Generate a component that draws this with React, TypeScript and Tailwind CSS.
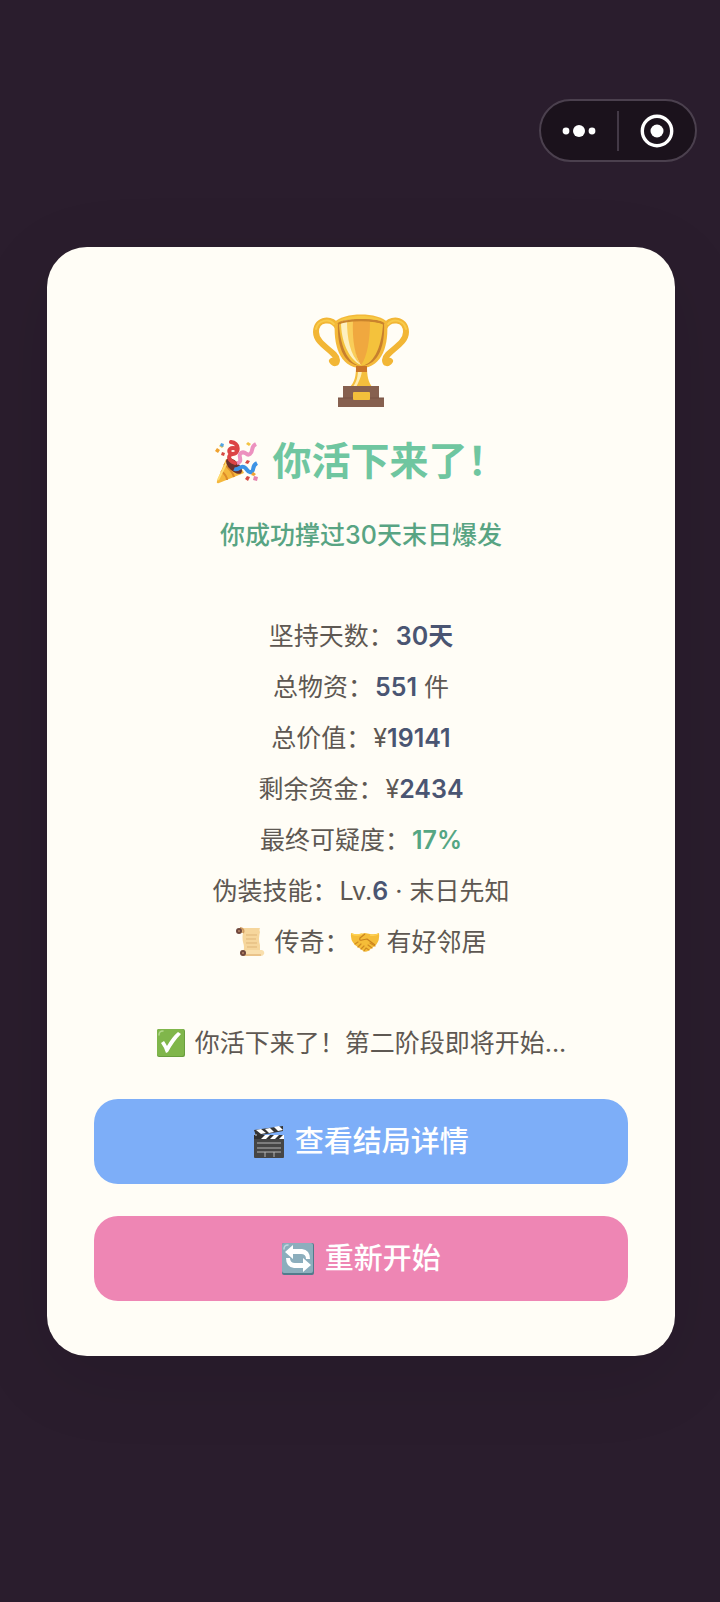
import type { ReactNode } from "react"

type IconProps = {
  className?: string
}

type Stat = {
  label: string
  content: ReactNode
}

function TrophyIcon({ className }: IconProps) {
  return (
    <svg viewBox="0 0 96 96" className={className} aria-hidden="true">
      <path d="M25 17C20 6 3 7 3 21C3 34 23 40 24 49C24 53 21 53 19 50" fill="none" stroke="#f2b635" strokeWidth="6" strokeLinecap="round" />
      <path d="M71 17C76 6 93 7 93 21C93 34 73 40 72 49C72 53 75 53 77 50" fill="none" stroke="#f2b635" strokeWidth="6" strokeLinecap="round" />
      <path d="M21 13C16 7 5 9 3 18" fill="none" stroke="#f8cb4b" strokeWidth="2" strokeLinecap="round" />
      <path d="M75 13C80 7 91 9 93 18" fill="none" stroke="#f8cb4b" strokeWidth="2" strokeLinecap="round" />
      <path d="M36 77C42 71 43 65 43 55H54C54 65 55 71 60 77Z" fill="#f4bf3d" />
      <path d="M39 77C44 71 45 65 45 58H49C49 66 45 71 43 77Z" fill="#fdeeb4" />
      <path d="M22 11C30 1 66 1 74 11C76 32 70 57 48 57C26 57 20 32 22 11Z" fill="#f4b93a" />
      <path d="M25 12C33 6 63 6 71 12C72 32 67 54 48 55C29 54 24 32 25 12Z" fill="#c77f2e" />
      <path d="M26 13C34 9 62 9 70 13C69 31 63 53 48 55C33 53 27 31 26 13Z" fill="#f4c23c" />
      <path d="M28 11C35 8 41 9 42 9C41 30 44 46 48 54C35 48 28 29 28 11Z" fill="#fdf0c0" />
      <path d="M34 10L41 9C40 30 43 46 47 53C37 44 34 27 34 10Z" fill="#f9cd59" />
      <path d="M40 9H57C57 30 54 46 48 54C42 46 39 29 40 9Z" fill="#f0a83f" />
      <path d="M24 11C32 3 64 3 72 11C62 7 34 7 24 11Z" fill="#f7c943" />
      <path d="M25 13C33 8 63 8 71 13" fill="none" stroke="#c9842d" strokeWidth="2" />
      <path d="M43 55H54V61H43Z" fill="#c97427" />
      <path d="M30 75H66V87H71V96H25V87H30Z" fill="#86604f" />
      <path d="M25 87H71" stroke="#795244" />
      <rect x="40" y="81" width="17" height="8" rx="1" fill="#f2bf3b" />
    </svg>
  )
}

function PartyIcon({ className }: IconProps) {
  return (
    <svg viewBox="0 0 44 44" className={className} aria-hidden="true">
      <path d="M11 19C17 20 27 27 29 33L4 43Q1 44 2 41Z" fill="#f5b83d" />
      <path d="M9 24C15 29 18 33 19 37M6 31C10 34 12 37 12 40" fill="none" stroke="#dd8b29" strokeWidth="2" />
      <path d="M3 40L12 22" stroke="#ffdc70" strokeWidth="2" />
      <ellipse cx="19" cy="26" rx="5" ry="10" transform="rotate(-46 19 26)" fill="#69302c" />
      <path d="M20 23C12 20 13 14 18 14C23 14 23 8 18 8C13 8 13 14 18 14C25 13 24 3 16 2" fill="none" stroke="#dc4445" strokeWidth="4" strokeLinecap="round" />
      <path d="M22 23C29 22 22 15 26 13C31 10 31 17 35 14C39 11 35 7 41 4" fill="none" stroke="#ec91bf" strokeWidth="4" />
      <path d="M19 29C24 31 25 25 29 27C33 29 32 33 36 32C40 31 36 26 42 23" fill="none" stroke="#3d93e5" strokeWidth="4" />
      <path d="M6 4L9 6L7 8L4 6ZM33 2L36 4L34 6L31 4Z" fill="#f3c342" />
      <path d="M39 36L43 37L42 41L38 40Z" fill="#e582ae" />
      <path d="M7 12L10 13L9 16L6 15ZM32 20L35 21L33 24L30 23ZM32 36L35 37L33 41L30 39Z" fill="#d64a42" />
      <path d="M2 8L5 10L3 13L0 11ZM38 32L41 34L39 36L36 35Z" fill="#f0a22e" />
      <path d="M6 3L9 4L8 7L5 6Z" fill="#51a4e8" />
    </svg>
  )
}

function ScrollIcon({ className }: IconProps) {
  return (
    <svg viewBox="0 0 30 30" className={className} aria-hidden="true">
      <path d="M4 1H25Q24 3 25 5Q23 12 25 18V25H8Q10 21 8 15Q7 10 8 6H4Z" fill="#f6d69c" />
      <path d="M6 23H27Q30 24 29 27Q28 29 26 29H7Z" fill="#f9dfad" />
      <path d="M8 28H26" stroke="#dba767" />
      <path d="M11 8H22M11 12H21M11 16H22M12 20H22" stroke="#dfb579" strokeWidth="1" />
      <path d="M5 1Q10 2 8 6" fill="none" stroke="#d09c62" strokeWidth="2" />
      <circle cx="4" cy="4" r="3" fill="#70483d" />
      <circle cx="4" cy="4" r="1" fill="#b88669" />
      <circle cx="8" cy="26" r="3" fill="#70483d" />
      <circle cx="8" cy="26" r="1" fill="#b88669" />
    </svg>
  )
}

function HandshakeIcon({ className }: IconProps) {
  return (
    <svg viewBox="0 0 30 30" className={className} aria-hidden="true">
      <path d="M1 6Q5 8 10 7L15 6L20 7Q25 8 29 6Q30 13 26 18L18 24Q15 26 12 23L5 18Q0 13 1 6Z" fill="#f5bd38" />
      <path d="M15 7L10 11Q9 14 12 13L17 12L25 18" fill="none" stroke="#c9821d" strokeWidth="1.2" strokeLinejoin="round" />
      <path d="M5 17L8 15M8 20L11 17M11 22L14 19M14 24L16 21M16 21L19 23M18 18L22 21M20 16L25 19" stroke="#d08a20" strokeWidth="1.2" strokeLinecap="round" />
      <path d="M2 7Q6 9 12 7M20 8Q25 9 28 7" fill="none" stroke="#ffd252" strokeWidth="1.4" />
    </svg>
  )
}

function CheckIcon({ className }: IconProps) {
  return (
    <svg viewBox="0 0 30 30" className={className} aria-hidden="true">
      <rect x="1" y="1" width="28" height="28" rx="2" fill="#699e3d" />
      <rect x="1" y="1" width="27" height="27" rx="2" fill="#80b64b" />
      <path d="M3 7Q3 3 7 3" fill="none" stroke="#b2d88c" strokeWidth="1.5" strokeLinecap="round" />
      <path d="M5 15L8 13Q10 16 11 18Q16 9 22 4L25 6Q18 13 12 24L10 25Q8 19 5 15Z" fill="#fff" />
    </svg>
  )
}

function ClapperIcon({ className }: IconProps) {
  return (
    <svg viewBox="0 0 32 34" className={className} aria-hidden="true">
      <path d="M1 5L30 1V6L3 11Z" fill="#353535" />
      <path d="M3 5L8 4L13 8L8 9ZM12 4L17 3L21 7L16 8ZM21 2L26 1L30 5L25 6Z" fill="#fff" />
      <rect x="1" y="10" width="30" height="23" rx="1" fill="#454545" />
      <path d="M1 10H31V14H1Z" fill="#303030" />
      <path d="M8 14L12 10H17L13 14ZM17 14L21 10H26L22 14ZM26 14L30 10H31V14Z" fill="#fff" />
      <path d="M4 18H28M4 23H28M4 27H28M12 27V32M21 27V32" stroke="#b5b5b5" strokeWidth="1" />
      <circle cx="3" cy="10" r="1" fill="#999" />
    </svg>
  )
}

function RestartIcon({ className }: IconProps) {
  return (
    <svg viewBox="0 0 34 34" className={className} aria-hidden="true">
      <rect x="1" y="1" width="32" height="32" rx="2" fill="#527b8c" />
      <rect x="1" y="1" width="31" height="30" rx="2" fill="#8caebd" />
      <path d="M3 7Q3 3 7 3" fill="none" stroke="#c1d6df" strokeWidth="1.5" strokeLinecap="round" />
      <path d="M4 10L12 3V7H21Q29 8 29 17H25Q25 12 20 12H12V17Z" fill="#fff" />
      <path d="M30 23L22 30V26H13Q5 25 5 16H9Q9 21 14 21H22V16Z" fill="#fff" />
    </svg>
  )
}

function Strong({ children }: { children: ReactNode }) {
  return <strong className="font-semibold text-[#4a5572]">{children}</strong>
}

const stats: Stat[] = [
  { label: "坚持天数：", content: <Strong>30天</Strong> },
  { label: "总物资：", content: <><Strong>551</Strong> 件</> },
  { label: "总价值：", content: <>¥<Strong>19141</Strong></> },
  { label: "剩余资金：", content: <>¥<Strong>2434</Strong></> },
  { label: "最终可疑度：", content: <strong className="font-semibold text-[#55a683]">17%</strong> },
  { label: "伪装技能：", content: <>Lv.<Strong>6</Strong> · 末日先知</> },
]

function Capsule() {
  return (
    <div className="flex h-[63px] w-[158px] items-center rounded-full border-2 border-[#4b404e] bg-[#1b121c]">
      <button type="button" aria-label="更多" className="flex flex-1 justify-center">
        <svg viewBox="0 0 34 14" className="h-[14px] w-[34px]" fill="#fff">
          <circle cx="4" cy="7" r="3.4" />
          <circle cx="17" cy="7" r="6" />
          <circle cx="30" cy="7" r="3.4" />
        </svg>
      </button>
      <span className="h-10 w-0.5 bg-[#433946]" />
      <button type="button" aria-label="关闭" className="flex flex-1 justify-center">
        <svg viewBox="0 0 34 34" className="size-[34px]">
          <circle cx="17" cy="17" r="14.7" fill="none" stroke="#fff" strokeWidth="3.4" />
          <circle cx="17" cy="17" r="6.5" fill="#fff" />
        </svg>
      </button>
    </div>
  )
}

export default function App() {
  return (
    <div
      lang="zh-CN"
      className="min-h-screen overflow-hidden bg-[#2a1d2d] pb-16 font-[Inter,'Noto_Sans_CJK_SC',sans-serif]"
    >
      <header className="flex justify-end px-[23px] pt-[99px]">
        <Capsule />
      </header>

      <main className="mr-[45px] ml-[47px] mt-[85px] rounded-[40px] bg-[#fffdf6] px-[47px] pt-16 pb-[55px] text-center shadow-[0_20px_80px_rgba(0,0,0,0.1)]">
        <TrophyIcon className="mx-auto size-24" />

        <h1 className="mt-[30px] text-[39px] leading-[48px] font-bold text-[#6fc6a0]">
          <PartyIcon className="mr-1 inline size-11 align-[-9px]" /> 你活下来了！
        </h1>

        <p className="mt-[30px] text-[25px] leading-10 font-medium text-[#58a483]">
          你成功撑过30天末日爆发
        </p>

        <ul className="mt-14 text-[25px] leading-[51px] text-[#5e5852]">
          {stats.map((stat) => (
            <li key={stat.label}>
              <span className="mr-0.5">{stat.label}</span>{stat.content}
            </li>
          ))}
          <li>
            <ScrollIcon className="mr-0.5 inline size-[30px] align-[-6px]" /> 传奇：
            <HandshakeIcon className="inline size-[30px] align-[-6px]" /> 有好邻居
          </li>
        </ul>

        <p className="mt-[50px] text-[25px] leading-[51px] text-[#5e5852]">
          <CheckIcon className="mr-0.5 inline size-[30px] align-[-6px]" /> 你活下来了！第二阶段即将开始...
        </p>

        <div className="mt-[30px] flex flex-col gap-8 text-[29px] leading-[45px] font-medium text-white">
          <button type="button" className="rounded-3xl bg-[#7daef8] py-5">
            <ClapperIcon className="mr-0.5 inline h-[34px] w-8 align-[-7px]" /> 查看结局详情
          </button>
          <button type="button" className="rounded-3xl bg-[#ee86b4] py-5">
            <RestartIcon className="mr-0.5 inline size-[34px] align-[-7px]" /> 重新开始
          </button>
        </div>
      </main>
    </div>
  )
}
